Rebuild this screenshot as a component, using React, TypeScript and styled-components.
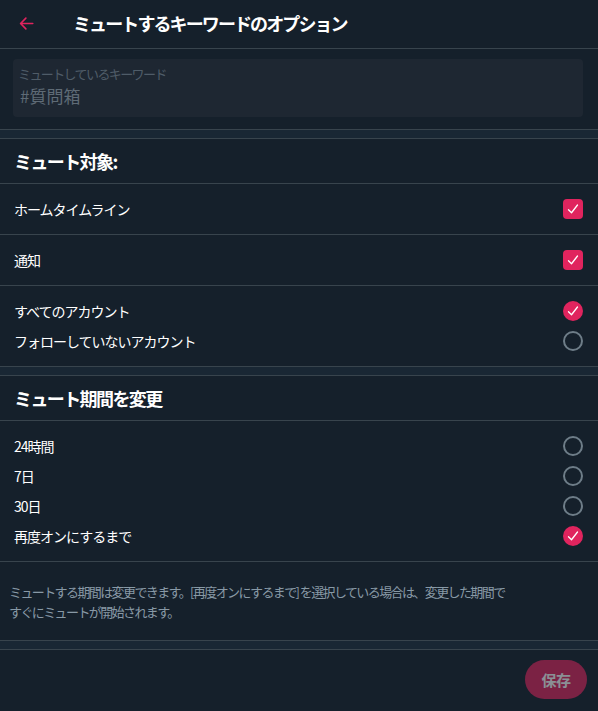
import React from "react";
import styled, { createGlobalStyle } from "styled-components";

const GlobalStyle = createGlobalStyle`
  html, body {
    margin: 0;
    padding: 0;
    background: #15202b;
  }
  body {
    font-family: "Noto Sans CJK JP", "Noto Sans", sans-serif;
    color: #ffffff;
  }
`;

const Page = styled.div`
  width: 598px;
  min-height: 711px;
  background: #15202b;
  display: flex;
  flex-direction: column;
`;

const Header = styled.header`
  height: 48px;
  display: flex;
  align-items: center;
  border-bottom: 1px solid #38444d;
  padding-left: 19px;
`;

const BackButton = styled.button`
  width: 40px;
  height: 40px;
  margin-right: 14px;
  display: flex;
  align-items: center;
  padding: 0;
  background: none;
  border: none;
  color: #e0245e;
  margin-top: -2px;
`;

const Title = styled.h1`
  margin: 0;
  font-size: 18px;
  font-weight: 700;
  letter-spacing: -1.9px;
  margin-top: -2px;
`;

const InputWrap = styled.div`
  padding: 10px 15px 12px 13px;
`;

const InputBox = styled.label`
  display: flex;
  flex-direction: column;
  height: 58px;
  box-sizing: border-box;
  background: #1e2732;
  border-radius: 4px;
  padding: 6px 6px 0 5px;
`;

const InputLabel = styled.span`
  font-size: 13px;
  letter-spacing: -1.6px;
  color: #4f5c68;
  line-height: 18px;
`;

const InputValue = styled.span`
  font-size: 17px;
  color: #5f6b76;
  line-height: 26px;
  margin-left: 2px;
`;

const Spacer = styled.div`
  height: 8px;
  background: #192734;
  border-top: 1px solid #38444d;
  border-bottom: 1px solid #38444d;
`;

const SectionTitle = styled.h2`
  margin: 0;
  height: 44px;
  display: flex;
  align-items: center;
  padding-left: 14px;
  font-size: 18px;
  font-weight: 700;
  letter-spacing: -1.6px;
  border-bottom: 1px solid #38444d;
`;

const CheckRow = styled.div`
  height: 50px;
  display: flex;
  align-items: center;
  justify-content: space-between;
  padding: 0 15px 0 14px;
  border-bottom: 1px solid #38444d;
`;

const Group = styled.div<{ $last?: boolean }>`
  padding: 10px 0;
  border-bottom: ${(p) => (p.$last ? "none" : "1px solid #38444d")};
`;

const OptionRow = styled.div`
  height: 30px;
  display: flex;
  align-items: center;
  justify-content: space-between;
  padding: 0 15px 0 14px;
`;

const OptionText = styled.span`
  font-size: 14px;
  letter-spacing: -1px;
`;

const Box = styled.span<{ $round?: boolean; $on?: boolean }>`
  width: 20px;
  height: 20px;
  box-sizing: border-box;
  display: flex;
  align-items: center;
  justify-content: center;
  border-radius: ${(p) => (p.$round ? "50%" : "4px")};
  background: ${(p) => (p.$on ? "#e0245e" : "transparent")};
  border: ${(p) => (p.$on ? "none" : "2px solid #6e7d88")};
`;

const Help = styled.p`
  margin: 0;
  padding: 20px 10px 18px 9px;
  font-size: 13px;
  line-height: 20px;
  letter-spacing: -1.6px;
  color: #8899a6;
`;

const Footer = styled.div`
  display: flex;
  justify-content: flex-end;
  padding: 10px 11px;
`;

const SaveButton = styled.button`
  height: 39px;
  min-width: 62px;
  padding: 0 16px;
  border: none;
  border-radius: 20px;
  background: #e0245e;
  opacity: 0.5;
  color: #ffffff;
  font-family: "Noto Sans CJK JP", sans-serif;
  font-size: 15px;
  font-weight: 700;
  letter-spacing: -0.5px;
`;

const Check = () => (
  <svg width="12" height="12" viewBox="0 0 24 24" fill="none">
    <path d="M3 13.5l6 6L21 4" stroke="#fff" strokeWidth="2.6" strokeLinecap="round" strokeLinejoin="round" />
  </svg>
);

const Toggle = ({ round, on }: { round?: boolean; on?: boolean }) => (
  <Box $round={round} $on={on}>{on && <Check />}</Box>
);

const accounts = [
  { label: "すべてのアカウント", on: true },
  { label: "フォローしていないアカウント", on: false },
];

const durations = [
  { label: "24時間", on: false },
  { label: "7日", on: false },
  { label: "30日", on: false },
  { label: "再度オンにするまで", on: true },
];

export default function App() {
  return (
    <Page>
      <GlobalStyle />
      <Header>
        <BackButton aria-label="戻る">
          <svg width="15" height="15" viewBox="0 0 24 24" fill="none">
            <path d="M22 12H3M11 3.5L2.5 12l8.5 8.5" stroke="currentColor" strokeWidth="2.6" strokeLinecap="round" strokeLinejoin="round" />
          </svg>
        </BackButton>
        <Title>ミュートするキーワードのオプション</Title>
      </Header>

      <InputWrap>
        <InputBox>
          <InputLabel>ミュートしているキーワード</InputLabel>
          <InputValue>#質問箱</InputValue>
        </InputBox>
      </InputWrap>

      <Spacer />
      <SectionTitle>ミュート対象:</SectionTitle>
      <CheckRow>
        <OptionText>ホームタイムライン</OptionText>
        <Toggle on />
      </CheckRow>
      <CheckRow>
        <OptionText>通知</OptionText>
        <Toggle on />
      </CheckRow>
      <Group $last>
        {accounts.map((a) => (
          <OptionRow key={a.label}>
            <OptionText>{a.label}</OptionText>
            <Toggle round on={a.on} />
          </OptionRow>
        ))}
      </Group>

      <Spacer />
      <SectionTitle>ミュート期間を変更</SectionTitle>
      <Group>
        {durations.map((d) => (
          <OptionRow key={d.label}>
            <OptionText>{d.label}</OptionText>
            <Toggle round on={d.on} />
          </OptionRow>
        ))}
      </Group>

      <Help>
        ミュートする期間は変更できます。[再度オンにするまで] を選択している場合は、変更した期間で
        <br />
        すぐにミュートが開始されます。
      </Help>

      <Spacer />
      <Footer>
        <SaveButton disabled>保存</SaveButton>
      </Footer>
    </Page>
  );
}
